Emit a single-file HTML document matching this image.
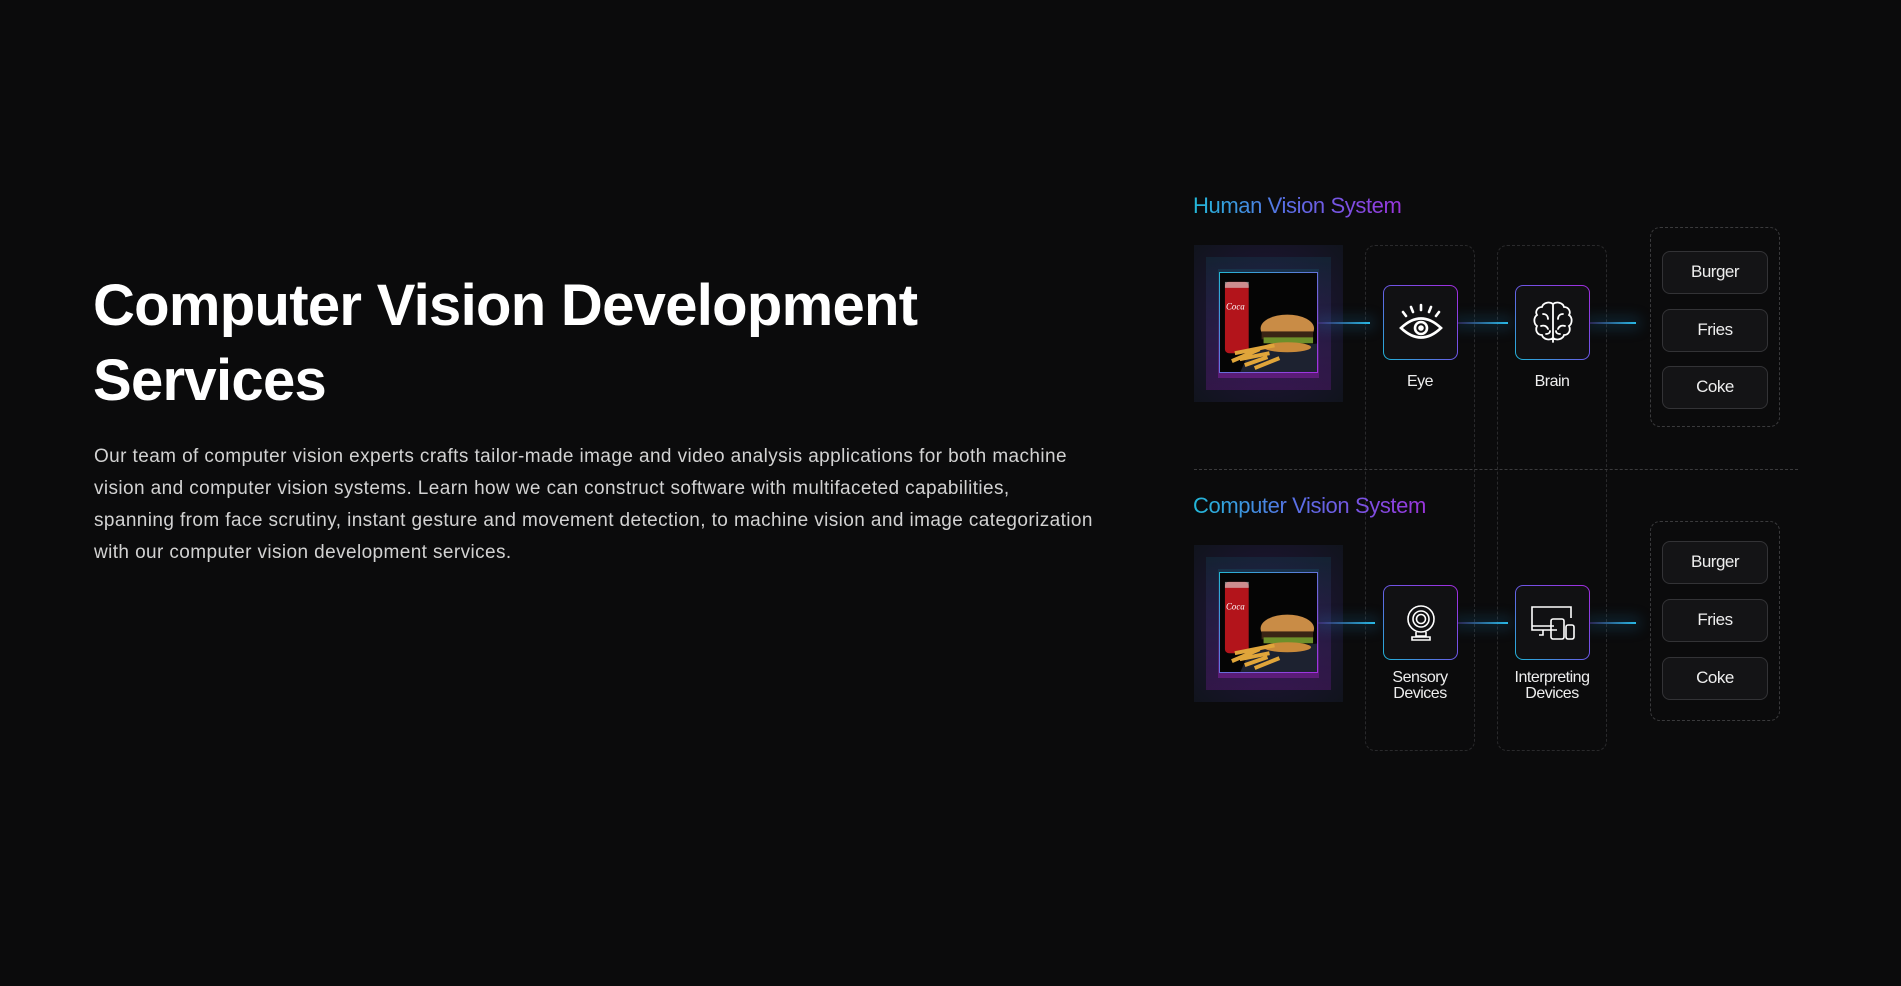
<!DOCTYPE html>
<html><head><meta charset="utf-8"><style>
*{margin:0;padding:0;box-sizing:border-box}
body{width:1901px;height:986px;background:#0b0b0c;position:relative;overflow:hidden;font-family:"Liberation Sans",sans-serif;color:#fff}
h1{position:absolute;left:93px;top:268px;font-size:58px;line-height:75px;font-weight:700;letter-spacing:-0.7px;width:1000px}
p.d{position:absolute;left:94px;top:441px;width:1100px;font-size:19px;line-height:32px;color:#d2d2d2;letter-spacing:0.4px;white-space:nowrap}
.ttl{position:absolute;left:1193px;font-size:22px;letter-spacing:-0.4px;background:linear-gradient(90deg,#22b8d8,#5a6ee6 45%,#9a35dc);-webkit-background-clip:text;background-clip:text;color:transparent}
.glow{position:absolute;left:1194px;width:149px;height:157px;background:radial-gradient(ellipse at center,rgba(60,30,110,.5),rgba(20,25,40,.6));}
.glow:before{content:"";position:absolute;inset:12px;background:linear-gradient(180deg,rgba(20,60,80,.35),rgba(80,25,110,.5))}
.glow:after{content:"";position:absolute;inset:24px;background:linear-gradient(180deg,rgba(20,80,100,.35),rgba(120,30,150,.6))}
.img{position:absolute;left:25px;top:27px;width:99px;height:101px;border:1.5px solid;border-image:linear-gradient(135deg,#23b6d4,#a52de0) 1;z-index:2;background:#060606;overflow:hidden}
.box{position:absolute;width:75px;height:75px;border-radius:8px;border:1.5px solid transparent;background:linear-gradient(#111113,#111113) padding-box,linear-gradient(225deg,#a42be0,#6a5ae6 50%,#1fb6d6) border-box;display:flex;align-items:center;justify-content:center}
.lbl{position:absolute;width:110px;text-align:center;font-size:16px;line-height:16px;letter-spacing:-0.5px;color:#eee}
.col{position:absolute;top:245px;height:506px;width:110px;border:1px dashed #2a2a2c;border-radius:10px}
.line{position:absolute;height:2px;background:linear-gradient(90deg,rgba(90,70,180,.4),#29b8e6);box-shadow:0 0 14px 4px rgba(30,140,200,.25)}
.out{position:absolute;left:1650px;width:130px;height:200px;border:1.5px dashed #3a3a3c;border-radius:10px}
.btn{position:absolute;left:11px;width:106px;height:43px;border:1.5px solid #333336;border-radius:8px;background:#141416;text-align:center;line-height:40px;font-size:17px;letter-spacing:-0.5px;color:#eee}
.hr{position:absolute;left:1194px;top:469px;width:604px;border-top:1.5px dashed #3a3a3c}
</style></head><body>
<h1>Computer Vision Development Services</h1>
<p class="d">Our team of computer vision experts crafts tailor-made image and video analysis applications for both machine<br>vision and computer vision systems. Learn how we can construct software with multifaceted capabilities,<br>spanning from face scrutiny, instant gesture and movement detection, to machine vision and image categorization<br>with our computer vision development services.</p>

<div class="col" style="left:1365px"></div>
<div class="col" style="left:1497px"></div>

<div class="ttl" style="top:193px">Human Vision System</div>
<div class="ttl" style="top:493px">Computer Vision System</div>

<div class="glow" style="top:245px"><div class="img">
<svg width="99" height="101" viewBox="0 0 100 100"><rect width="100" height="100" fill="#050505"/><path d="M30 78 L100 70 L100 100 L20 100Z" fill="#1d2230"/><rect x="5" y="8" width="24" height="72" rx="4" fill="#b3141b"/><rect x="5" y="8" width="24" height="6" fill="#ddd" opacity=".6"/><text x="6" y="36" font-size="9" fill="#fff" font-style="italic" font-family="Liberation Serif">Coca</text><ellipse cx="68" cy="55" rx="27" ry="14" fill="#c98c46"/><rect x="42" y="58" width="52" height="8" fill="#3a2415"/><rect x="44" y="64" width="50" height="6" fill="#6d8f2a"/><ellipse cx="68" cy="74" rx="24" ry="5" fill="#c98a3a"/><path d="M15 80 L55 72 M20 86 L50 80 M25 92 L48 84 M12 88 L40 76 M35 95 L60 85" stroke="#e0a53a" stroke-width="4"/></svg>
</div></div>
<div class="line" style="left:1318px;top:322px;width:52px"></div>
<div class="line" style="left:1457px;top:322px;width:51px"></div>
<div class="line" style="left:1589px;top:322px;width:47px"></div>
<div class="box" style="left:1383px;top:285px"><svg width="48" height="40" viewBox="0 0 48 40" fill="none" stroke="#fff" stroke-width="2.6" stroke-linecap="round"><path d="M4 25 Q24 6 44 25 Q24 44 4 25Z"/><circle cx="24" cy="25" r="6"/><circle cx="24" cy="25" r="1.5" fill="#fff"/><path d="M24 2v5M14 4l2 5M34 4l-2 5M6 9l3 4M42 9l-3 4"/></svg></div>
<div class="lbl" style="left:1365px;top:374px">Eye</div>
<div class="box" style="left:1515px;top:285px"><svg width="44" height="46" viewBox="0 0 44 46" fill="none" stroke="#fff" stroke-width="1.8" stroke-linecap="round"><path d="M22 4v38M22 4c-4-3-10-1-11 3-5 0-7 5-5 8-4 3-3 9 0 11-2 4 0 9 5 9 1 4 7 6 11 3M22 4c4-3 10-1 11 3 5 0 7 5 5 8 4 3 3 9 0 11 2 4 0 9-5 9-1 4-7 6-11 3M12 14c3 0 5 2 5 5M10 26c3-1 6 0 7 3M32 14c-3 0-5 2-5 5M34 26c-3-1-6 0-7 3M15 34c2 0 4-1 4-3M29 34c-2 0-4-1-4-3"/></svg></div>
<div class="lbl" style="left:1497px;top:374px">Brain</div>
<div class="out" style="top:227px"><div class="btn" style="top:23px">Burger</div><div class="btn" style="top:81px">Fries</div><div class="btn" style="top:138px">Coke</div></div>

<div class="hr"></div>

<div class="glow" style="top:545px"><div class="img">
<svg width="99" height="101" viewBox="0 0 100 100"><rect width="100" height="100" fill="#050505"/><path d="M30 78 L100 70 L100 100 L20 100Z" fill="#1d2230"/><rect x="5" y="8" width="24" height="72" rx="4" fill="#b3141b"/><rect x="5" y="8" width="24" height="6" fill="#ddd" opacity=".6"/><text x="6" y="36" font-size="9" fill="#fff" font-style="italic" font-family="Liberation Serif">Coca</text><ellipse cx="68" cy="55" rx="27" ry="14" fill="#c98c46"/><rect x="42" y="58" width="52" height="8" fill="#3a2415"/><rect x="44" y="64" width="50" height="6" fill="#6d8f2a"/><ellipse cx="68" cy="74" rx="24" ry="5" fill="#c98a3a"/><path d="M15 80 L55 72 M20 86 L50 80 M25 92 L48 84 M12 88 L40 76 M35 95 L60 85" stroke="#e0a53a" stroke-width="4"/></svg>
</div></div>
<div class="line" style="left:1318px;top:622px;width:57px"></div>
<div class="line" style="left:1457px;top:622px;width:51px"></div>
<div class="line" style="left:1589px;top:622px;width:47px"></div>
<div class="box" style="left:1383px;top:585px"><svg width="34" height="40" viewBox="0 0 34 40" fill="none" stroke="#fff" stroke-width="1.6"><circle cx="17" cy="16" r="13"/><circle cx="17" cy="16" r="8"/><circle cx="17" cy="16" r="4.5"/><path d="M12 29v4h10v-4M8 37h18v-3H8z"/></svg></div>
<div class="lbl" style="left:1365px;top:670px">Sensory<br>Devices</div>
<div class="box" style="left:1515px;top:585px"><svg width="48" height="38" viewBox="0 0 48 38" fill="none" stroke="#fff" stroke-width="1.6"><path d="M28 26H3V3h39v11"/><path d="M3 22h22M14 26v5h-4"/><rect x="22" y="15" width="13" height="20" rx="2"/><rect x="37" y="21" width="8" height="14" rx="2"/></svg></div>
<div class="lbl" style="left:1497px;top:670px">Interpreting<br>Devices</div>
<div class="out" style="top:521px"><div class="btn" style="top:19px">Burger</div><div class="btn" style="top:77px">Fries</div><div class="btn" style="top:135px">Coke</div></div>
</body></html>
